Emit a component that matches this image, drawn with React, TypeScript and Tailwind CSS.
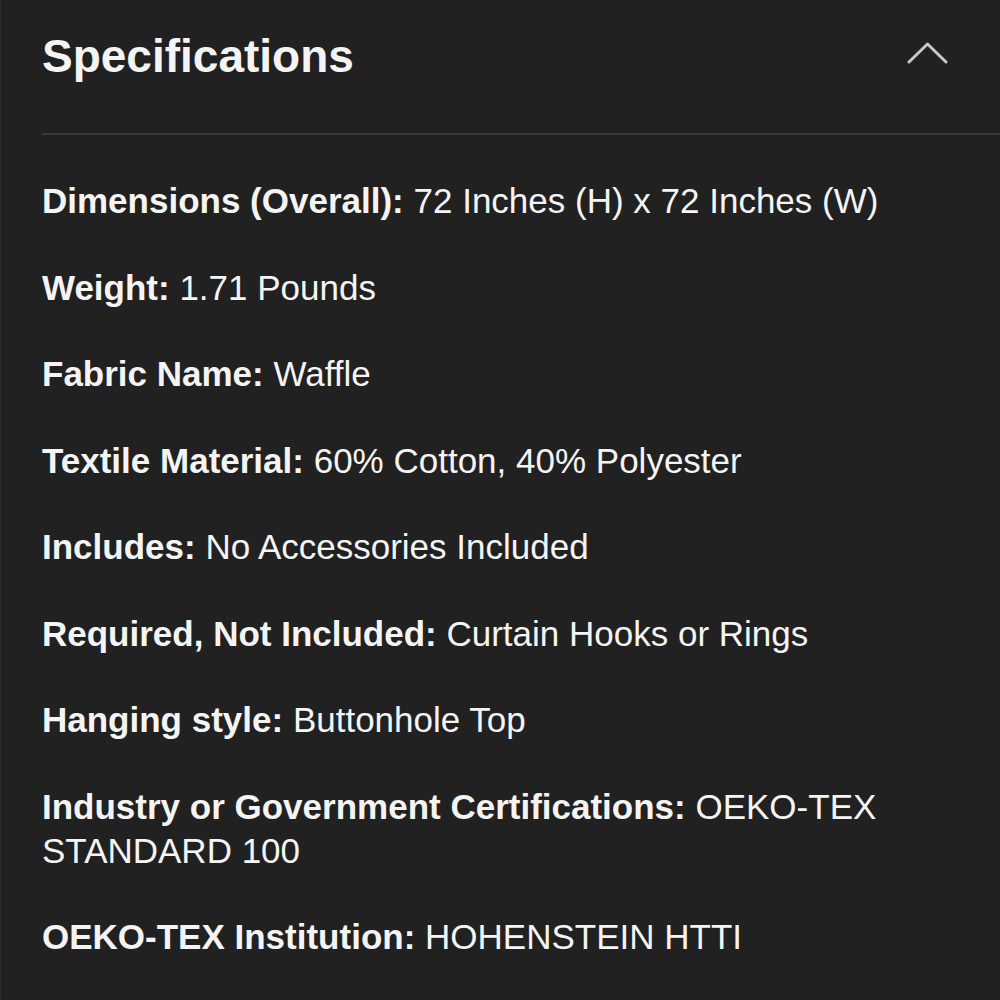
type Spec = {
  label: string;
  value: string;
};

const specs: Spec[] = [
  { label: "Dimensions (Overall):", value: "72 Inches (H) x 72 Inches (W)" },
  { label: "Weight:", value: "1.71 Pounds" },
  { label: "Fabric Name:", value: "Waffle" },
  { label: "Textile Material:", value: "60% Cotton, 40% Polyester" },
  { label: "Includes:", value: "No Accessories Included" },
  { label: "Required, Not Included:", value: "Curtain Hooks or Rings" },
  { label: "Hanging style:", value: "Buttonhole Top" },
  {
    label: "Industry or Government Certifications:",
    value: "OEKO-TEX STANDARD 100",
  },
  { label: "OEKO-TEX Institution:", value: "HOHENSTEIN HTTI" },
];

const App = () => {
  return (
    <div className="min-h-[1000px] w-[1000px] bg-[#212121] border-l border-[#2c2c2c] font-['Liberation_Sans',Arial,sans-serif] text-[#f4f4f4]">
      {/* header */}
      <div className="ml-[41px] flex h-[135px] items-start justify-between border-b-2 border-[#383838] pt-[29px]">
        <h2 className="text-[46px] font-bold leading-[54px]">Specifications</h2>
        <svg
          width="41"
          height="22"
          viewBox="0 0 41 22"
          className="mr-[52px] mt-[13px]"
          fill="none"
          stroke="#c8c8c8"
          strokeWidth="3"
          strokeLinecap="round"
          strokeLinejoin="round"
        >
          <polyline points="2,20 20.5,2 39,20" />
        </svg>
      </div>

      {/* spec list */}
      <div className="ml-[41px] mr-[50px] flex flex-col gap-[42.5px] pt-[44px]">
        {specs.map((spec) => (
          <p key={spec.label} className="text-[35px] leading-[44px]">
            <span className="font-bold">{spec.label}</span> {spec.value}
          </p>
        ))}
      </div>
    </div>
  );
};

export default App;
